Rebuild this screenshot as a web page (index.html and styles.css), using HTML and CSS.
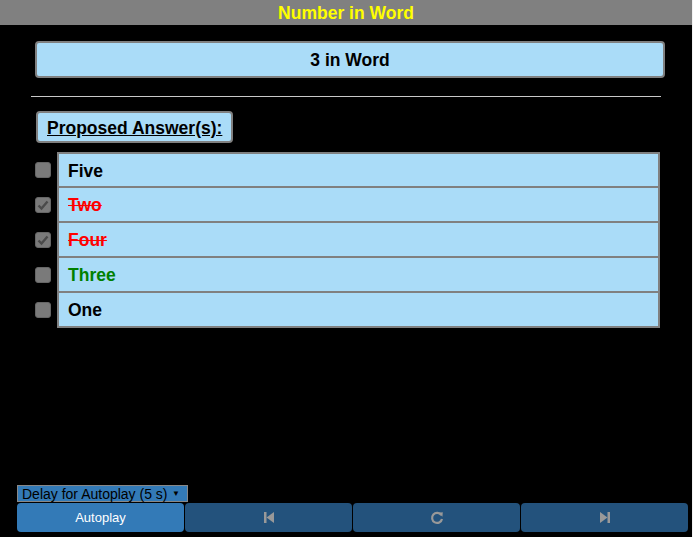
FILE: index.html
```html
<!DOCTYPE html>
<html>
<head>
<meta charset="utf-8">
<title>Number in Word</title>
<link rel="stylesheet" href="styles.css">
</head>
<body>
<div class="app">
  <header class="title">Number in Word</header>
  <div class="question">3 in Word</div>
  <hr class="rule">
  <div class="label-row"><span class="label">Proposed Answer(s):</span></div>
  <ul class="options">
    <li class="option"><span class="check"></span><span class="text">Five</span></li>
    <li class="option"><span class="check checked"><svg viewBox="0 0 16 16" width="16" height="16"><path d="M3.5 8.5 L6.5 11.5 L12.5 4.5" fill="none" stroke="#4a4a4a" stroke-width="2.4"/></svg></span><span class="text wrong">Two</span></li>
    <li class="option"><span class="check checked"><svg viewBox="0 0 16 16" width="16" height="16"><path d="M3.5 8.5 L6.5 11.5 L12.5 4.5" fill="none" stroke="#4a4a4a" stroke-width="2.4"/></svg></span><span class="text wrong">Four</span></li>
    <li class="option"><span class="check"></span><span class="text right">Three</span></li>
    <li class="option"><span class="check"></span><span class="text">One</span></li>
  </ul>
  <div class="spacer"></div>
  <div class="controls">
    <div class="select">Delay for Autoplay (5 s) <span class="caret">▼</span></div>
    <div class="buttons">
      <button class="btn primary">Autoplay</button>
      <button class="btn"><svg width="10" height="11" viewBox="0 0 10 11"><rect x="0" y="0" width="2.5" height="11" fill="#999"/><path d="M10 0 L10 11 L2.5 5.5 Z" fill="#999"/></svg></button>
      <button class="btn"><svg width="14" height="14" viewBox="0 0 14 14"><path d="M11.3 4.2 A5 5 0 1 0 12 8" fill="none" stroke="#999" stroke-width="2.2"/><path d="M8.2 1.8 L12.8 1.2 L12.4 5.8 Z" fill="#999"/></svg></button>
      <button class="btn"><svg width="10" height="11" viewBox="0 0 10 11"><rect x="7.5" y="0" width="2.5" height="11" fill="#999"/><path d="M0 0 L0 11 L7.5 5.5 Z" fill="#999"/></svg></button>
    </div>
  </div>
</div>
</body>
</html>
```

FILE: styles.css
```css
html {
  background: #f2f2f2;
}
body {
  margin: 0;
  font-family: "Liberation Sans", Arial, sans-serif;
}
.app {
  width: 692px;
  height: 537px;
  background: #000;
  display: flex;
  flex-direction: column;
}
.title {
  height: 25px;
  line-height: 26px;
  background: #808080;
  color: #ffff00;
  font-weight: bold;
  font-size: 17.5px;
  text-align: center;
}
.question {
  margin: 16px 0 0 35px;
  width: 626px;
  height: 33px;
  line-height: 34px;
  border: 2px solid #808080;
  border-radius: 4px;
  background: #aadcf8;
  text-align: center;
  font-weight: bold;
  font-size: 17.5px;
  color: #000;
}
.rule {
  margin: 18px 0 0 31px;
  width: 630px;
  height: 0;
  border: 0;
  border-top: 1px solid #c8c8c8;
}
.label-row {
  display: flex;
  margin: 14px 0 0 36px;
}
.label {
  height: 28px;
  line-height: 30px;
  padding: 0 9px;
  border: 2px solid #808080;
  border-radius: 4px;
  background: #aadcf8;
  font-weight: bold;
  font-size: 17.5px;
  text-decoration: underline;
  color: #000;
}
.options {
  list-style: none;
  margin: 9px 0 0 35px;
  padding: 0;
}
.option {
  display: flex;
  align-items: center;
  height: 35px;
}
.check {
  width: 14px;
  height: 14px;
  border: 1px solid #666;
  border-radius: 3px;
  background: #7a7a7a;
  margin-right: 6px;
  display: flex;
  align-items: center;
  justify-content: center;
  overflow: hidden;
}
.check svg {
  flex: none;
}
.text {
  width: 590px;
  height: 33px;
  line-height: 35px;
  padding-left: 9px;
  border: 2px solid #808080;
  margin-top: -2px;
  margin-bottom: -2px;
  background: #aadcf8;
  font-weight: bold;
  font-size: 17.5px;
  color: #000;
}
.option:first-child .text {
  margin-top: 0;
}
.wrong {
  color: #ff0000;
  text-decoration: line-through;
}
.right {
  color: #008000;
}
.spacer {
  flex: 1;
}
.controls {
  margin: 0 0 5px 17px;
}
.select {
  width: 158px;
  height: 15px;
  line-height: 16px;
  padding-left: 4px;
  padding-right: 7px;
  border: 1px solid #888;
  background: #337ab7;
  color: #000;
  font-size: 14px;
  display: flex;
  justify-content: space-between;
}
.caret {
  font-size: 8px;
}
.buttons {
  display: flex;
  gap: 1px;
  margin-top: 1px;
}
.btn {
  width: 167px;
  height: 29px;
  border: 0;
  border-radius: 4px;
  background: #23527c;
  color: #fff;
  font-family: "Liberation Sans", Arial, sans-serif;
  font-size: 13px;
  display: flex;
  align-items: center;
  justify-content: center;
  padding: 0;
}
.btn.primary {
  background: #337ab7;
}
```
